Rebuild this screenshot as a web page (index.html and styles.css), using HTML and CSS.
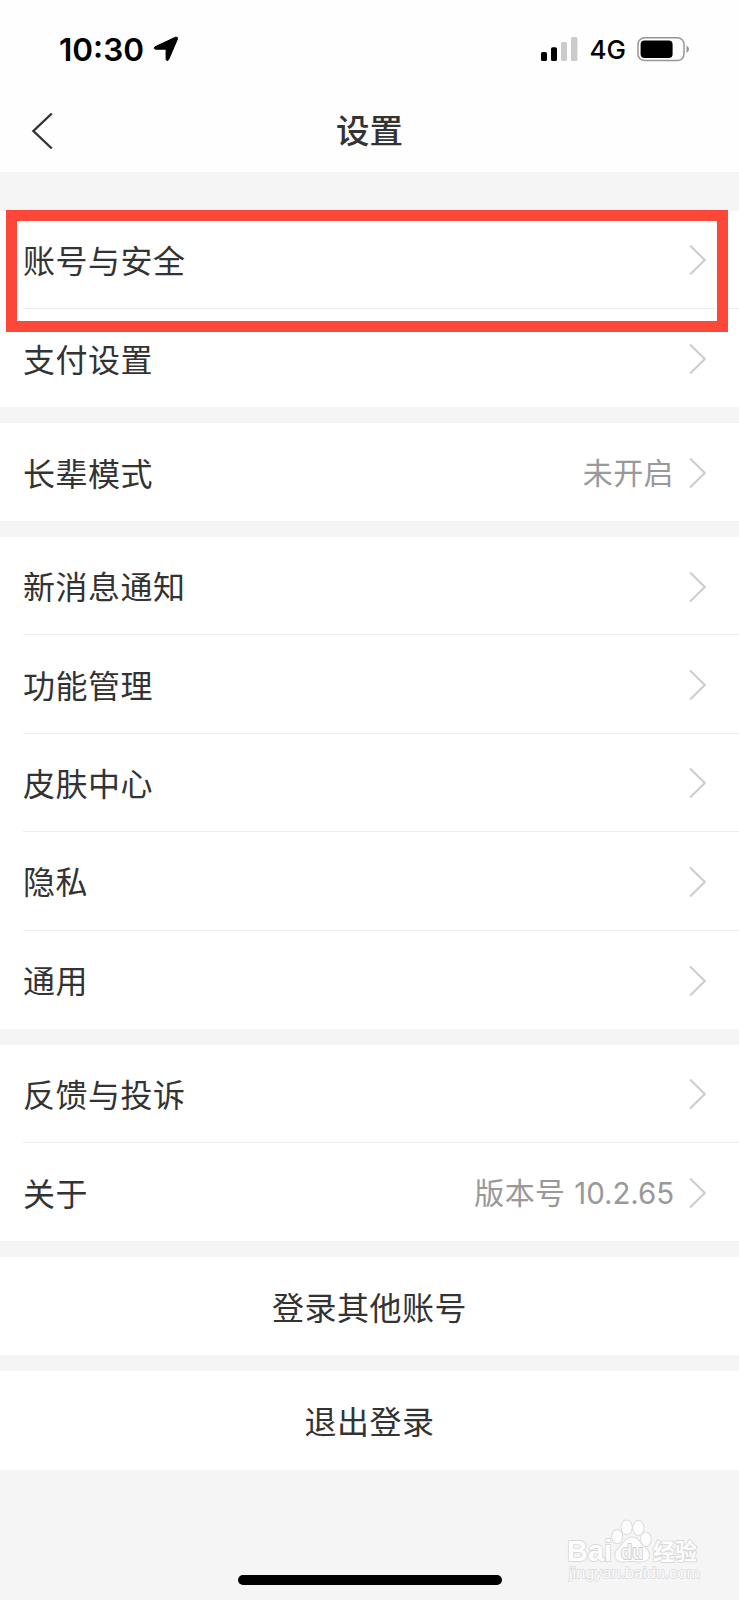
FILE: index.html
```html
<!DOCTYPE html>
<html lang="zh-CN">
<head>
<meta charset="utf-8">
<title>设置</title>
<link rel="stylesheet" href="styles.css">
</head>
<body>
<svg class="defs" width="0" height="0">
  <symbol id="chevron" viewBox="0 0 18 32"><path d="M1 1.6 15.8 16 1 30.4" fill="none" stroke="currentColor" stroke-width="2.1"/></symbol>
</svg>
<div class="screen">
  <header class="top">
    <div class="status">
      <div class="clock"><span class="time">10:30</span>
        <svg class="arrow" width="26" height="26" viewBox="0 0 26 26"><path d="M2 10.8 22.5 1.2Q25 .6 24.4 3.2L15.6 23.7Q14 25.8 13.1 23.4V13.2H2.6Q0 12.4 2 10.8Z" fill="#000" stroke="#000" stroke-linejoin="round"/></svg>
      </div>
      <div class="signal">
        <svg width="37" height="25" viewBox="0 0 37 25"><rect y="15" width="6" height="9" rx="1.6"/><rect x="10" y="10.2" width="6" height="13.8" rx="1.6"/><g fill="#cbcbcb"><rect x="20" y="5" width="6" height="19" rx="1.6"/><rect x="30" width="6.4" height="24" rx="1.6"/></g></svg>
        <span class="network">4G</span>
        <svg class="battery" width="53" height="25" viewBox="0 0 53 25"><rect x="1" y=".8" width="46" height="22.8" rx="6.5" fill="none" stroke="#969696" stroke-width="1.5"/><rect x="3.6" y="3.4" width="32" height="17.6" rx="4"/><path d="M49.5 8.4Q52 9.6 52 12.2T49.5 16Z" fill="#969696"/></svg>
      </div>
    </div>
    <div class="nav">
      <svg class="back" width="22" height="38" viewBox="0 0 22 38"><path d="M20.8 1.5 2.4 19 20.8 36.5" fill="none" stroke="#333" stroke-width="2.4"/></svg>
      <h1 class="title">设置</h1>
    </div>
  </header>
  <main class="groups">
    <section class="group">
      <div class="row highlighted"><span class="label">账号与安全</span><svg class="chevron"><use href="#chevron"/></svg></div>
      <div class="row"><span class="label">支付设置</span><svg class="chevron"><use href="#chevron"/></svg></div>
    </section>
    <section class="group">
      <div class="row"><span class="label">长辈模式</span><span class="value">未开启</span><svg class="chevron"><use href="#chevron"/></svg></div>
    </section>
    <section class="group">
      <div class="row"><span class="label">新消息通知</span><svg class="chevron"><use href="#chevron"/></svg></div>
      <div class="row"><span class="label">功能管理</span><svg class="chevron"><use href="#chevron"/></svg></div>
      <div class="row"><span class="label">皮肤中心</span><svg class="chevron"><use href="#chevron"/></svg></div>
      <div class="row"><span class="label">隐私</span><svg class="chevron"><use href="#chevron"/></svg></div>
      <div class="row"><span class="label">通用</span><svg class="chevron"><use href="#chevron"/></svg></div>
    </section>
    <section class="group">
      <div class="row"><span class="label">反馈与投诉</span><svg class="chevron"><use href="#chevron"/></svg></div>
      <div class="row"><span class="label">关于</span><span class="value">版本号 <span class="version">10.2.65</span></span><svg class="chevron"><use href="#chevron"/></svg></div>
    </section>
    <section class="group"><div class="row action"><span class="label">登录其他账号</span></div></section>
    <section class="group"><div class="row action"><span class="label">退出登录</span></div></section>
  </main>
  <div class="home-bar"></div>
  <svg class="watermark" width="140" height="70" viewBox="0 0 140 70">
    <g class="outlined">
      <text class="mark" x="0" y="42" font-size="30" textLength="45" lengthAdjust="spacingAndGlyphs">Bai</text>
      <ellipse cx="50.2" cy="17.6" rx="5" ry="6.7"/><ellipse cx="59.7" cy="8.3" rx="5" ry="7"/><ellipse cx="71.3" cy="9" rx="5.2" ry="7"/><ellipse cx="78.8" cy="20.3" rx="5" ry="6.7"/>
      <path d="M65 18.5C58 18.5 57 25 52 29S46 42.5 56 42.5C60 42.5 62 42 65 42S70 42.5 73 42.5C84 42.5 84 34 78 29S72 18.5 65 18.5Z"/>
      <text class="mark du" x="54" y="39.5" font-size="20" textLength="22" lengthAdjust="spacingAndGlyphs">du</text>
      <text class="mark" x="86" y="40.5" font-size="23" textLength="44" lengthAdjust="spacingAndGlyphs">经验</text>
    </g>
    <text class="site" x="2" y="59" textLength="131" lengthAdjust="spacingAndGlyphs">jingyan.baidu.com</text>
  </svg>
</div>
</body>
</html>
```
FILE: styles.css
```css
*, *::after { box-sizing: border-box; }
body { margin: 0; background: #f5f5f5; color: #333; font-family: Inter, "Noto Sans CJK SC", sans-serif; }
.defs { position: absolute; }
.screen { position: relative; width: 739px; height: 1600px; overflow: hidden; display: flex; flex-direction: column; background: #f5f5f5; }
.top { height: 172px; flex: none; background: #fefefe; }
.status { height: 92px; padding: 6px 49px 0 59px; display: flex; align-items: center; justify-content: space-between; color: #000; }
.clock, .signal { display: flex; align-items: center; }
.time { padding-top: 1px; font-size: 31.5px; font-weight: 600; line-height: 40px; }
.arrow { margin-left: 9px; }
.network { margin: 2px 11px 0 12px; font-size: 26px; font-weight: 500; line-height: 36px; }
.nav { height: 80px; padding-left: 31px; position: relative; display: flex; align-items: center; justify-content: center; }
.back { position: absolute; left: 31px; top: 20px; }
.title { margin: -2px 31px 0 0; font-size: 33.5px; line-height: 48px; font-weight: 500; }
.groups { padding-top: 38.5px; display: flex; flex-direction: column; gap: 15.8px; }
.group { background: #fff; }
.row { position: relative; height: 98.35px; margin-left: 23px; padding: 2px 32px 0 0; display: flex; align-items: center; font-size: 32px; letter-spacing: .5px; line-height: 46px; }
.row:not(:last-child) { border-bottom: 1px solid #ededed; }
.label { padding-top: 3px; }
.chevron { width: 18px; height: 32px; margin-left: auto; color: #cdcdcd; }
.value { margin-left: auto; color: #999; font-size: 30px; letter-spacing: .4px; }
.value + .chevron { margin-left: 15px; }
.version { font-size: 29.5px; letter-spacing: -.1px; }
.action { margin-left: 0; padding-right: 0; justify-content: center; }
.highlighted::after { content: ""; position: absolute; z-index: 1; left: -17px; top: -1px; width: 722px; height: 122px; border: 11px solid #fd4739; }
.home-bar { width: 264px; height: 10px; margin: auto auto 15px 238px; border-radius: 5px; background: #000; }
.watermark { position: absolute; left: 567px; top: 1519px; overflow: visible; }
.outlined { fill: #fdfdfd; stroke: #d9d9d9; stroke-width: 1.8px; stroke-linejoin: round; paint-order: stroke; }
.mark { font-family: "Liberation Sans", "Noto Sans CJK SC", sans-serif; font-weight: 700; }
.du { fill: #f5f5f5; stroke: #cecece; }
.site { font: 15px "Liberation Sans", sans-serif; fill: #fcfcfc; stroke: #dbdbdb; stroke-width: 1.4px; paint-order: stroke; }
```
